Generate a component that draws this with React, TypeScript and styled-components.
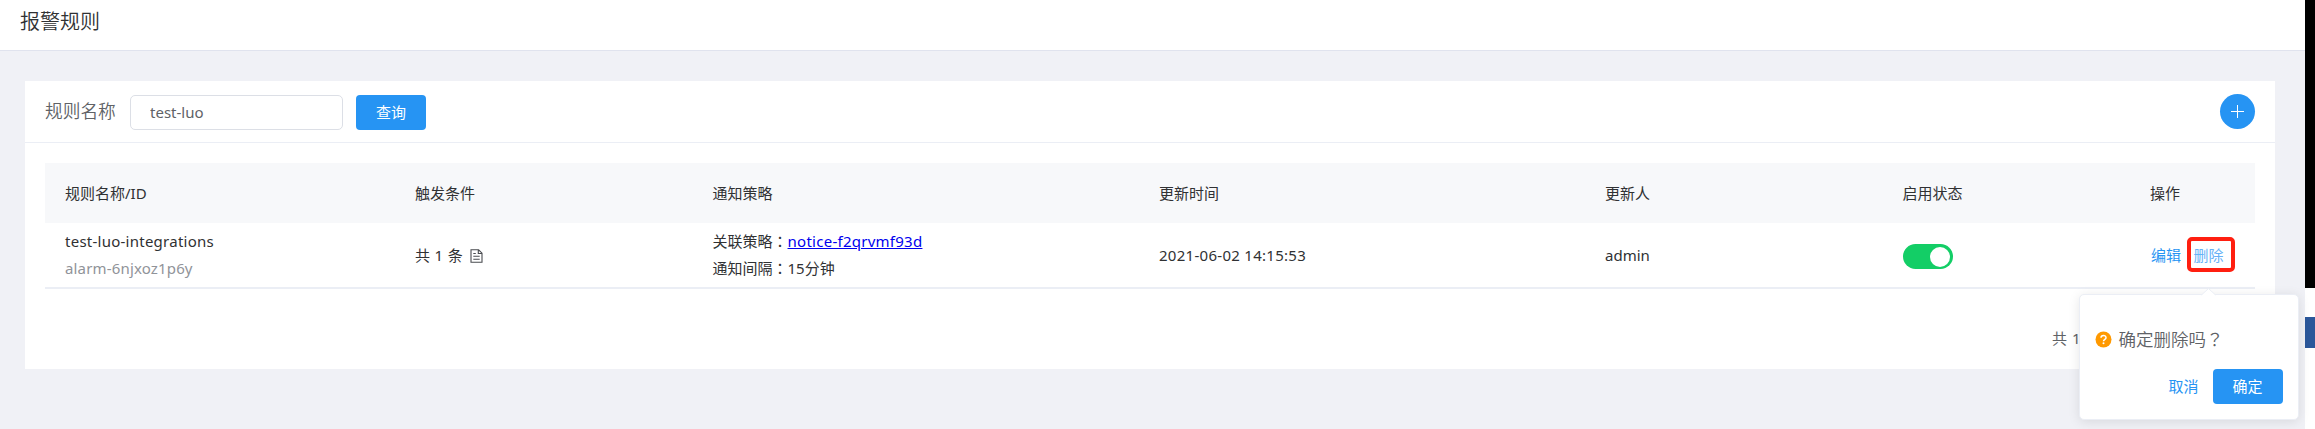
import React from 'react';
import styled, { createGlobalStyle } from 'styled-components';

const GlobalStyle = createGlobalStyle`
  * { box-sizing: border-box; }
  body {
    margin: 0;
    background: #fff;
    color: #303133;
    font: 15px/25px "Noto Sans", "Noto Sans CJK SC", sans-serif;
  }
`;

const Screen = styled.div`
  display: flex;
  height: 429px;
  overflow: hidden;
`;

const Page = styled.div`
  flex: 1;
  min-width: 0;
  background: #f0f1f6;
`;

const Edge = styled.div`
  display: flex;
  flex-direction: column;
  width: 10px;
  background: #fff;
`;

const EdgeBlock = styled.div<{ $h: number; $color: string }>`
  height: ${p => p.$h}px;
  background: ${p => p.$color};
`;

const Header = styled.header`
  height: 51px;
  padding: 7px 20px 0;
  background: #fff;
  border-bottom: 1px solid #e0e3ee;
`;

const Title = styled.h1`
  margin: 0;
  font-size: 20px;
  font-weight: 350;
  line-height: 30px;
`;

const Card = styled.section`
  height: 288px;
  margin: 30px 30px 0 25px;
  background: #fff;
`;

const Toolbar = styled.div`
  display: flex;
  align-items: flex-start;
  height: 62px;
  padding: 13px 20px 0;
  border-bottom: 1px solid #ebeef5;
`;

const Label = styled.label`
  width: 85px;
  color: #606266;
  font-size: 17.7px;
  font-weight: 350;
  line-height: 35px;
`;

const Field = styled.input`
  width: 213px;
  height: 35px;
  margin: 1px 13px 0 0;
  padding: 0 19px 2px;
  border: 1px solid #dcdfe6;
  border-radius: 5px;
  outline: none;
  background: #fff;
  color: #606266;
  font: inherit;
`;

const Button = styled.button`
  width: 70px;
  height: 35px;
  margin-top: 1px;
  padding: 0;
  border: 0;
  border-radius: 4px;
  background: #2694f3;
  color: #fff;
  font: inherit;
`;

const AddButton = styled.button`
  display: flex;
  align-items: center;
  justify-content: center;
  width: 35px;
  height: 35px;
  margin-left: auto;
  padding: 0;
  border: 0;
  border-radius: 50%;
  background: #2694f3;
`;

const Table = styled.div`
  margin: 20px 20px 0;
`;

const Row = styled.div<{ $head?: boolean }>`
  display: grid;
  grid-template-columns: 350px 297.5px 446.5px 446px 297.5px 247.5px 125px;
  align-items: center;
  height: ${p => (p.$head ? 60 : 66)}px;
  background: ${p => (p.$head ? '#f7f8fa' : '#fff')};
  border-bottom: ${p => (p.$head ? '0' : '2px solid #ebeef5')};
`;

const Cell = styled.div<{ $tall?: boolean }>`
  padding-left: 20px;
  line-height: ${p => (p.$tall ? 27 : 25)}px;
  white-space: nowrap;
`;

const Muted = styled.div`
  color: #909399;
  letter-spacing: 0.16px;
`;

const Spaced = styled.span<{ $ls: number }>`
  letter-spacing: ${p => p.$ls}px;
`;

const Count = styled.span`
  word-spacing: 0.7px;
`;

/* Full-width punctuation centred in its em box. */
const Punct = styled.span`
  font-family: "Noto Sans CJK TC", sans-serif;
  line-height: 1;
`;

const NoticeLink = styled.a`
  color: #0000ee;
  letter-spacing: 0.26px;
  text-decoration: underline;
`;

const DocIcon = styled.svg`
  margin-left: 7px;
  vertical-align: -2px;
`;

const Switch = styled.div`
  display: flex;
  justify-content: flex-end;
  width: 50px;
  height: 25px;
  margin-top: 3px;
  padding: 2.5px;
  border-radius: 13px;
  background: #13ce66;
`;

const Knob = styled.div`
  width: 20px;
  height: 20px;
  border-radius: 50%;
  background: #fff;
`;

const Actions = styled.div`
  display: flex;
  align-items: center;
  padding-left: 21px;
`;

const TextButton = styled.button<{ $soft?: boolean }>`
  height: 25px;
  padding: 0;
  border: 0;
  background: none;
  color: ${p => (p.$soft ? '#66b1f7' : '#2694f3')};
  font: inherit;
`;

const Anchor = styled.div`
  position: relative;
  display: flex;
  height: 25px;
  margin-left: 12.5px;
`;

const Marker = styled.div`
  position: absolute;
  top: -5.5px;
  left: -7px;
  width: 48px;
  height: 35px;
  border: 4px solid #ff1f10;
  border-radius: 5px;
`;

const Popover = styled.div`
  position: absolute;
  z-index: 2;
  top: 51.5px;
  left: -115px;
  width: 220px;
  height: 126px;
  padding: 31px 15px 0 15px;
  border: 1px solid #ebeef5;
  border-radius: 5px;
  background: #fff;
  box-shadow: 0 2px 12px rgba(0, 0, 0, 0.1);
`;

const Arrow = styled.svg`
  position: absolute;
  top: -7px;
  left: 121px;
`;

const Question = styled.div`
  display: flex;
  align-items: center;
  height: 26px;
  color: #606266;
  font-size: 17.5px;
  font-weight: 350;
`;

const QuestionIcon = styled.svg`
  margin: 1px 7px 0 0;
`;

const Choices = styled.div`
  display: flex;
  align-items: center;
  justify-content: flex-end;
  gap: 14px;
  margin-top: 16px;
`;

const Pagination = styled.div`
  margin: 37px 0 0 2027px;
  color: #606266;
  word-spacing: 1px;
`;

const columns = ['规则名称/ID', '触发条件', '通知策略', '更新时间', '更新人', '启用状态', '操作'];

export default function App() {
  return (
    <Screen>
      <GlobalStyle />
      <Page>
        <Header>
          <Title>报警规则</Title>
        </Header>
        <Card>
          <Toolbar>
            <Label htmlFor="rule-name">规则名称</Label>
            <Field id="rule-name" defaultValue="test-luo" />
            <Button>查询</Button>
            <AddButton aria-label="添加">
              <svg width="13" height="13" viewBox="0 0 13 13" stroke="#fff" strokeWidth="1">
                <path d="M0 6.5h13M6.5 0v13" />
              </svg>
            </AddButton>
          </Toolbar>
          <Table>
            <Row $head>
              {columns.map(name => (
                <Cell key={name}>{name}</Cell>
              ))}
            </Row>
            <Row>
              <Cell $tall>
                <Spaced $ls={0.25}>test-luo-integrations</Spaced>
                <Muted>alarm-6njxoz1p6y</Muted>
              </Cell>
              <Cell>
                <Count>共 1 条</Count>
                <DocIcon width="13" height="14" viewBox="0 0 13 14" fill="none" stroke="#4a4c50" strokeWidth="1.1">
                  <path d="M1 .8h7.6L12 4.2v9H1zM8.3 1v3.5H12M3.3 4.5h2.5M3.3 7.3h6.4M3.3 10.2h6.4" />
                </DocIcon>
              </Cell>
              <Cell $tall>
                <div>关联策略<Punct>：</Punct><NoticeLink href="#">notice-f2qrvmf93d</NoticeLink></div>
                <div>通知间隔<Punct>：</Punct>15分钟</div>
              </Cell>
              <Cell><Spaced $ls={0.28}>2021-06-02 14:15:53</Spaced></Cell>
              <Cell>admin</Cell>
              <Cell>
                <Switch><Knob /></Switch>
              </Cell>
              <Actions>
                <TextButton>编辑</TextButton>
                <Anchor>
                  <TextButton $soft>删除</TextButton>
                  <Marker />
                  <Popover>
                    <Arrow width="15" height="8" viewBox="0 0 15 8">
                      <path d="M0 7.5L7.5 .5L15 7.5V8H0z" fill="#fff" />
                      <path d="M.5 7L7.5 .5L14.5 7" fill="none" stroke="#ebeef5" />
                    </Arrow>
                    <Question>
                      <QuestionIcon width="17" height="17" viewBox="0 0 17 17" fill="none">
                        <circle cx="8.5" cy="8.5" r="8" fill="#ff9900" />
                        <path d="M6 6.8C6 3.7 11 3.7 11 6.7C11 8.3 8.5 8.3 8.5 10.2" stroke="#fff" strokeWidth="1.5" />
                        <circle cx="8.5" cy="12.2" r="1" fill="#fff" />
                      </QuestionIcon>
                      确定删除吗<Punct>？</Punct>
                    </Question>
                    <Choices>
                      <TextButton>取消</TextButton>
                      <Button>确定</Button>
                    </Choices>
                  </Popover>
                </Anchor>
              </Actions>
            </Row>
          </Table>
          <Pagination>共 1 条</Pagination>
        </Card>
      </Page>
      <Edge>
        <EdgeBlock $h={288} $color="#000" />
        <EdgeBlock $h={29} $color="#fff" />
        <EdgeBlock $h={31} $color="#2b579a" />
      </Edge>
    </Screen>
  );
}
